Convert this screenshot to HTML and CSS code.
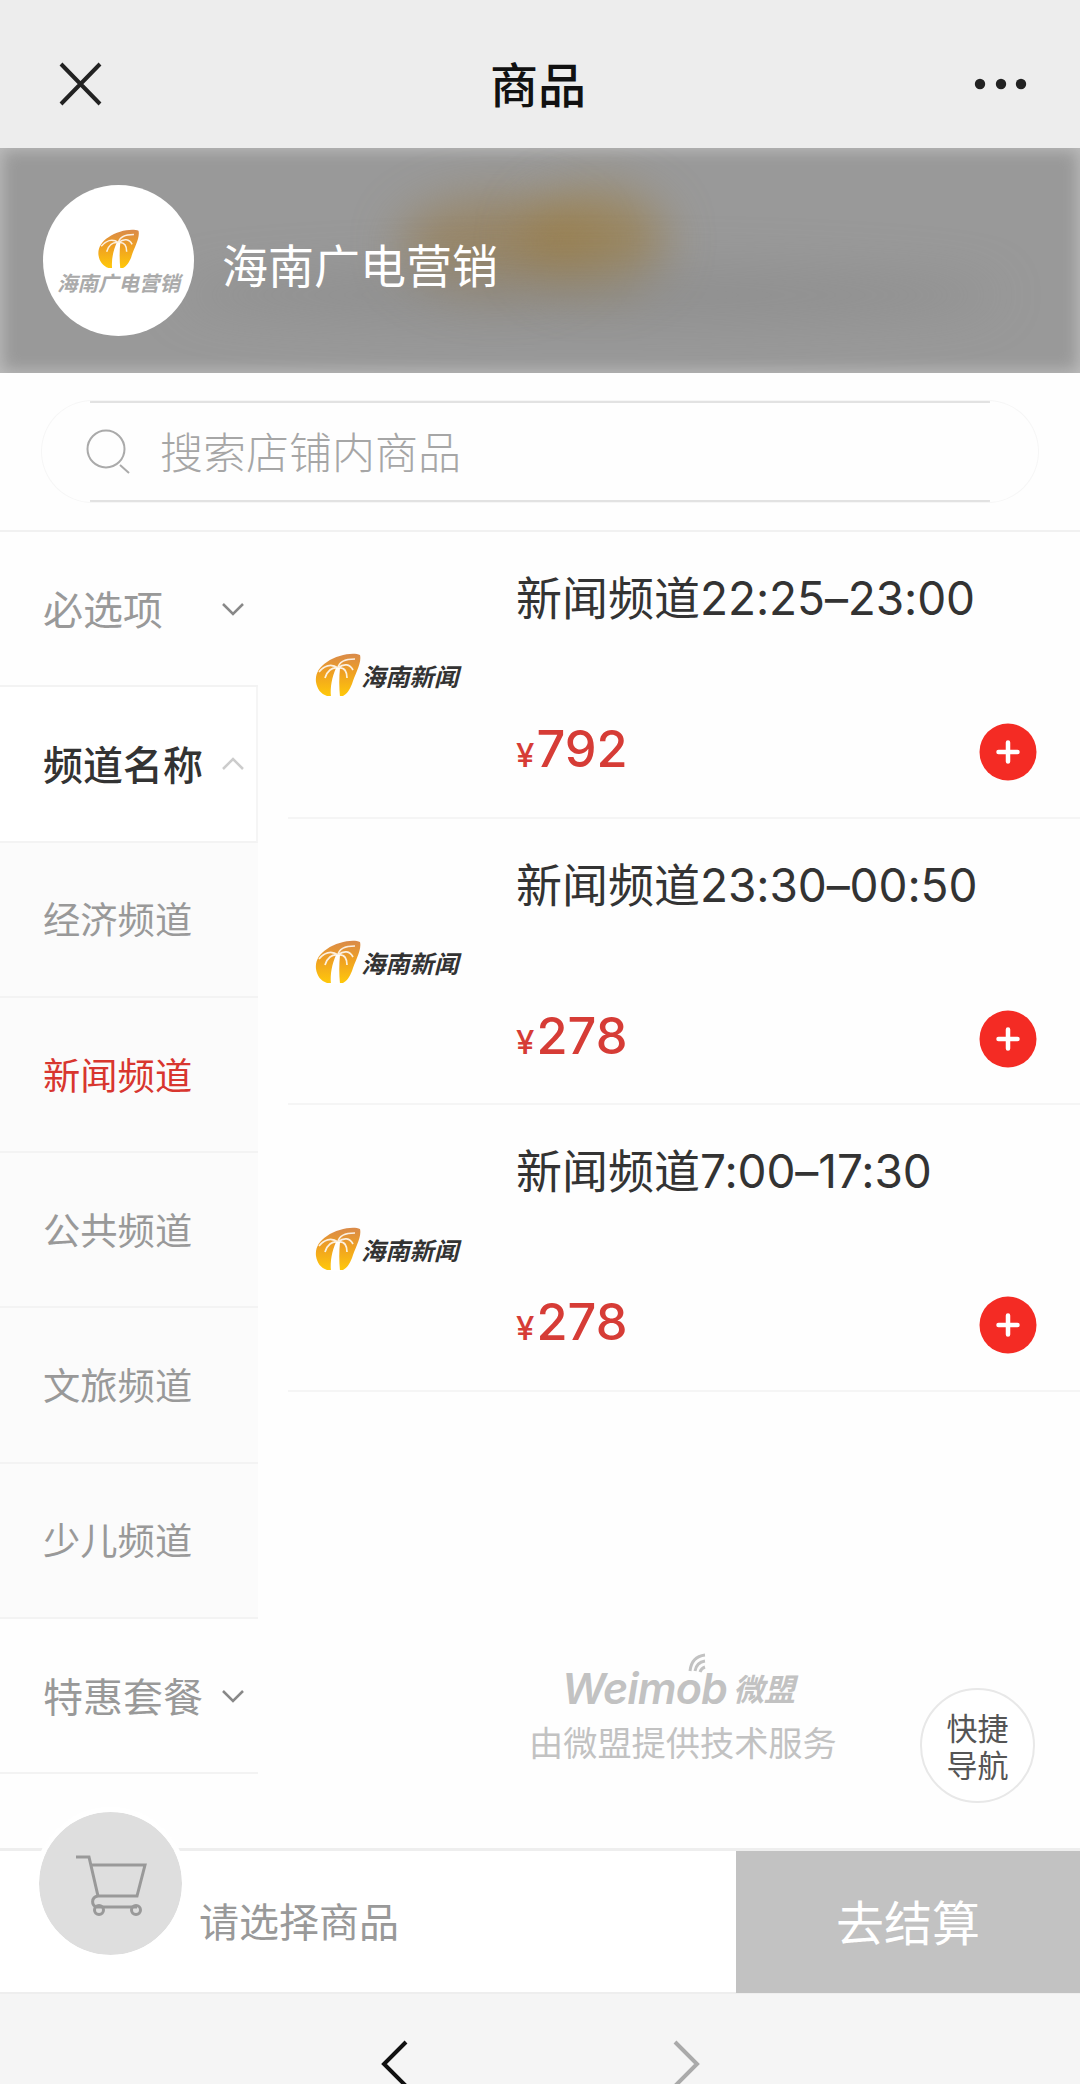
FILE: index.html
```html
<!DOCTYPE html>
<html lang="zh-CN">
<head>
  <meta charset="UTF-8">
  <title>商品</title>
  <link rel="stylesheet" href="styles.css">
</head>
<body>

  <!-- shared palm logo -->
  <svg class="defs" width="0" height="0">
    <defs>
      <linearGradient id="gold" x1="0" y1="0" x2="0" y2="1">
        <stop offset="0" stop-color="#d98a4a"/>
        <stop offset="0.45" stop-color="#efa022"/>
        <stop offset="1" stop-color="#ffc80a"/>
      </linearGradient>
      <symbol id="palm" viewBox="0 0 46 44">
        <path fill="url(#gold)" d="M45 2C38 -1 22 2 12 9C4 14 0 21 1 29C2 36 6 41 12 43H28C32 41 35 36 37 31C40 21 47 10 45 2Z"/>
        <path fill="#fff" d="M16 44C15 34 17 24 21 15L25 15C24 24 24 34 25 44Z"/>
        <path fill="none" stroke="#fff" stroke-opacity="0.85" stroke-width="1.7" d="M23 15C16 10 9 13 4 19M23 15C17 14 12 18 10 25M23 15C24 8 31 6 40 6M23 15C29 10 35 11 38 17M23 15C30 14 32 19 32 25"/>
      </symbol>
    </defs>
  </svg>

  <header class="topbar">
    <svg class="close" width="46" height="48" viewBox="0 0 46 48"><path d="M4 4L43 44M43 4L4 44"/></svg>
    <h1>商品</h1>
    <svg class="more" width="54" height="14" viewBox="0 0 54 14"><circle cx="7" cy="7" r="5.2"/><circle cx="28" cy="7" r="5.2"/><circle cx="48" cy="7" r="5.2"/></svg>
  </header>

  <section class="shop">
    <div class="glow glow-left"></div>
    <div class="glow glow-right"></div>
    <div class="glow glow-dark"></div>
    <div class="avatar">
      <svg width="43" height="40"><use href="#palm"/></svg>
      <span>海南广电营销</span>
    </div>
    <div class="shop-name">海南广电营销</div>
  </section>

  <div class="search-wrap">
    <div class="search">
      <svg width="46" height="46" viewBox="0 0 46 46"><circle cx="20" cy="20" r="18.5"/><path d="M34 36L43 44"/></svg>
      <span>搜索店铺内商品</span>
    </div>
  </div>

  <main class="content">
    <nav class="sidebar">
      <div class="cat">必选项<svg width="24" height="14" viewBox="0 0 24 14"><path d="M2 2L12 12L22 2"/></svg></div>
      <div class="cat open">频道名称<svg width="24" height="14" viewBox="0 0 24 14"><path d="M2 12L12 2L22 12"/></svg></div>
      <div class="sub">经济频道</div>
      <div class="sub active">新闻频道</div>
      <div class="sub">公共频道</div>
      <div class="sub">文旅频道</div>
      <div class="sub">少儿频道</div>
      <div class="cat">特惠套餐<svg width="24" height="14" viewBox="0 0 24 14"><path d="M2 2L12 12L22 2"/></svg></div>
    </nav>

    <div class="list">
      <div class="product">
        <div class="thumb"><svg width="46" height="44"><use href="#palm"/></svg><span>海南新闻</span></div>
        <div class="info">
          <div class="name">新闻频道<span>22:25–23:00</span></div>
          <div class="buy">
            <div class="price"><small>¥</small>792</div>
            <svg class="add" width="58" height="58" viewBox="0 0 58 58"><circle cx="29" cy="29" r="28.5"/><path d="M19.5 29H38.5M29 19.5V38.5"/></svg>
          </div>
        </div>
      </div>
      <div class="product">
        <div class="thumb"><svg width="46" height="44"><use href="#palm"/></svg><span>海南新闻</span></div>
        <div class="info">
          <div class="name">新闻频道<span>23:30–00:50</span></div>
          <div class="buy">
            <div class="price"><small>¥</small>278</div>
            <svg class="add" width="58" height="58" viewBox="0 0 58 58"><circle cx="29" cy="29" r="28.5"/><path d="M19.5 29H38.5M29 19.5V38.5"/></svg>
          </div>
        </div>
      </div>
      <div class="product">
        <div class="thumb"><svg width="46" height="44"><use href="#palm"/></svg><span>海南新闻</span></div>
        <div class="info">
          <div class="name">新闻频道<span>7:00–17:30</span></div>
          <div class="buy">
            <div class="price"><small>¥</small>278</div>
            <svg class="add" width="58" height="58" viewBox="0 0 58 58"><circle cx="29" cy="29" r="28.5"/><path d="M19.5 29H38.5M29 19.5V38.5"/></svg>
          </div>
        </div>
      </div>

      <div class="powered">
        <div class="brand">
          <span class="brand-en">Weimob</span><span class="brand-cn">微盟</span>
          <svg class="signal" width="20" height="22" viewBox="0 0 20 22"><path d="M2 18C3 9 8 3 17 2M7 18C8 12 11 9 17 8M12 19C13 16 14 15 17 14"/></svg>
        </div>
        <div class="support">由微盟提供技术服务</div>
      </div>
    </div>

    <div class="quick">快捷<br>导航</div>
  </main>

  <footer class="cartbar">
    <div class="cart">
      <svg width="72" height="70" viewBox="0 0 72 70"><path d="M1 4H14L23 43H62L70 12H16M23 43C16 44 16 53 22 54H62"/><circle cx="24" cy="57" r="4.5"/><circle cx="61" cy="57" r="4.5"/></svg>
    </div>
    <div class="hint">请选择商品</div>
    <div class="checkout">去结算</div>
  </footer>

  <div class="browser-nav">
    <svg width="30" height="52" viewBox="0 0 30 52"><path d="M26 4L4 26L26 48"/></svg>
    <svg class="forward" width="30" height="52" viewBox="0 0 30 52"><path d="M4 4L26 26L4 48"/></svg>
  </div>

</body>
</html>
```
FILE: styles.css
```css
* {
  box-sizing: border-box;
}

body {
  margin: 0;
  width: 1080px;
  height: 2084px;
  overflow: hidden;
  background: #fefefe;
  font-family: Inter, "Noto Sans CJK SC", sans-serif;
  color: #333;
}

svg {
  display: block;
  flex: none;
  fill: none;
}

.defs {
  position: absolute;
}

/* top bar */
.topbar {
  display: flex;
  justify-content: space-between;
  height: 148px;
  padding: 20px 53px 0 57px;
  align-items: center;
  background: #ededed;
}

.topbar h1 {
  margin: 4px 0 0;
  font-size: 48px;
  font-weight: 500;
  line-height: 60px;
  color: #111;
}

.close {
  stroke: #222;
  stroke-width: 4;
}

.more {
  fill: #222;
}

/* shop banner */
.shop {
  position: relative;
  display: flex;
  align-items: center;
  height: 225px;
  padding-left: 43px;
  background: #999;
  box-shadow: inset 0 0 16px 2px #bebebe;
  overflow: hidden;
}

.glow {
  position: absolute;
  border-radius: 50%;
  filter: blur(24px);
}

.glow-left {
  left: 400px;
  top: 50px;
  width: 190px;
  height: 95px;
  background: rgba(152, 122, 70, 0.6);
}

.glow-right {
  left: 525px;
  top: 42px;
  width: 140px;
  height: 100px;
  background: rgba(155, 125, 65, 0.65);
}

.glow-dark {
  left: 180px;
  top: 120px;
  width: 820px;
  height: 54px;
  background: rgba(130, 130, 130, 0.4);
}

.avatar {
  position: relative;
  display: flex;
  flex-direction: column;
  align-items: center;
  width: 151px;
  height: 151px;
  padding-top: 44px;
  border-radius: 50%;
  background: #fff;
}

.avatar span {
  margin-top: 3px;
  font-size: 20.5px;
  line-height: 24px;
  font-weight: 700;
  font-style: italic;
  color: #aaa;
  white-space: nowrap;
}

.shop-name {
  position: relative;
  margin: 10px 0 0 28px;
  font-size: 46px;
  line-height: 60px;
  color: #fff;
}

/* search */
.search-wrap {
  height: 159px;
  padding: 28px 42px 0;
  border-bottom: 2px solid #f1f1f1;
}

/* straight edges are darker than the rounded ends */
.search {
  display: flex;
  align-items: center;
  height: 101px;
  padding-left: 42px;
  border: 2px solid transparent;
  border-radius: 51px;
  background: linear-gradient(#e2e2e2, #e2e2e2) center top / calc(100% - 96px) 2px no-repeat border-box,
    linear-gradient(#e2e2e2, #e2e2e2) center bottom / calc(100% - 96px) 2px no-repeat border-box;
  box-shadow: 0 0 0 1px #f6f6f6;
  font-size: 43px;
  font-weight: 300;
  color: #a6a6a6;
}

.search svg {
  stroke: #aaa;
  stroke-width: 2;
}

.search span {
  margin: -4px 0 0 28px;
}

/* categories */
.content {
  position: relative;
  display: flex;
  height: 1316px;
}

.sidebar {
  width: 258px;
  flex: none;
}

.cat,
.sub {
  display: flex;
  align-items: center;
  justify-content: space-between;
  height: 155.3px;
  padding: 0 13px 2px 43px;
  border-bottom: 2px solid #f3f3f3;
  color: #999;
}

.cat {
  font-size: 40px;
}

.cat svg {
  stroke: #888;
  stroke-width: 2.5;
  margin-top: 3px;
}

.cat.open {
  border-right: 2px solid #f5f5f5;
  padding-right: 11px;
  background: #fff;
  font-weight: 500;
  color: #333;
}

.cat.open svg {
  stroke: #ccc;
}

.sub {
  background: #fbfbfb;
  font-size: 37.3px;
}

.sub.active {
  color: #d8362f;
}

/* products */
.list {
  flex: 1;
  padding-left: 30px;
}

.product {
  display: flex;
  height: 286.7px;
  border-bottom: 2px solid #f5f5f5;
}

.thumb {
  display: flex;
  align-items: center;
  width: 228px;
  padding: 2px 0 0 27px;
}

.thumb span {
  margin-top: 1px;
  font-size: 24.3px;
  font-weight: 700;
  font-style: italic;
  color: #333;
}

.info {
  flex: 1;
  padding: 35px 43px 0 0;
}

.name {
  font-size: 46px;
  line-height: 62px;
}

.name span {
  letter-spacing: -0.1px;
}

.buy {
  display: flex;
  align-items: center;
  justify-content: space-between;
  margin-top: 91px;
}

.price {
  font-size: 50.5px;
  line-height: 58px;
  font-weight: 500;
  color: #d63c36;
}

.price small {
  margin-right: 2px;
  font-size: 33px;
}

.add {
  fill: #f42b24;
  stroke: #fff;
  stroke-width: 4.5;
  stroke-linecap: round;
}

.add circle {
  stroke: none;
}

/* powered by */
.powered {
  width: 306px;
  margin: 266px 0 0 241px;
  color: #c2c2c2;
}

.brand {
  position: relative;
  display: flex;
  align-items: center;
  height: 60px;
  padding-left: 33px;
  font-style: italic;
}

.brand-en {
  width: 163px;
  font-size: 43px;
  font-weight: 600;
  letter-spacing: -0.8px;
}

.brand-cn {
  margin: -2px 0 0 8px;
  font-size: 31px;
  font-weight: 700;
}

.signal {
  position: absolute;
  left: 159px;
  top: -5px;
  stroke: #c2c2c2;
  stroke-width: 3;
}

.support {
  font-size: 34.2px;
  line-height: 52px;
  white-space: nowrap;
}

.quick {
  position: absolute;
  right: 45px;
  bottom: 45px;
  width: 115px;
  height: 115px;
  padding-top: 20px;
  border: 2px solid #e8e8e8;
  border-radius: 50%;
  background: #fff;
  font-size: 31px;
  line-height: 37px;
  text-align: center;
  color: #555;
}

/* cart bar */
.cartbar {
  position: relative;
  display: flex;
  height: 146px;
  border-top: 3px solid #eee;
  border-bottom: 2px solid #eee;
  background: #fff;
}

.cart {
  position: absolute;
  left: 34px;
  top: -44px;
  display: flex;
  align-items: center;
  justify-content: center;
  width: 153px;
  height: 153px;
  border: 5px solid #fff;
  border-radius: 50%;
  background: #dedede;
  background-clip: padding-box;
}

.cart svg {
  stroke: #999;
  stroke-width: 3;
  margin-top: 9px;
}

.hint {
  flex: 1;
  padding-left: 199px;
  font-size: 40px;
  line-height: 143px;
  color: #999;
}

.checkout {
  width: 344px;
  margin-bottom: -1px;
  background: #c2c2c2;
  font-size: 48px;
  line-height: 145px;
  text-align: center;
  color: #fff;
}

.browser-nav {
  display: flex;
  justify-content: center;
  gap: 261px;
  height: 90px;
  padding-top: 44px;
  background: #f5f5f5;
}

.browser-nav svg {
  stroke: #111;
  stroke-width: 4;
}

.browser-nav .forward {
  stroke: #aaa;
}
```
